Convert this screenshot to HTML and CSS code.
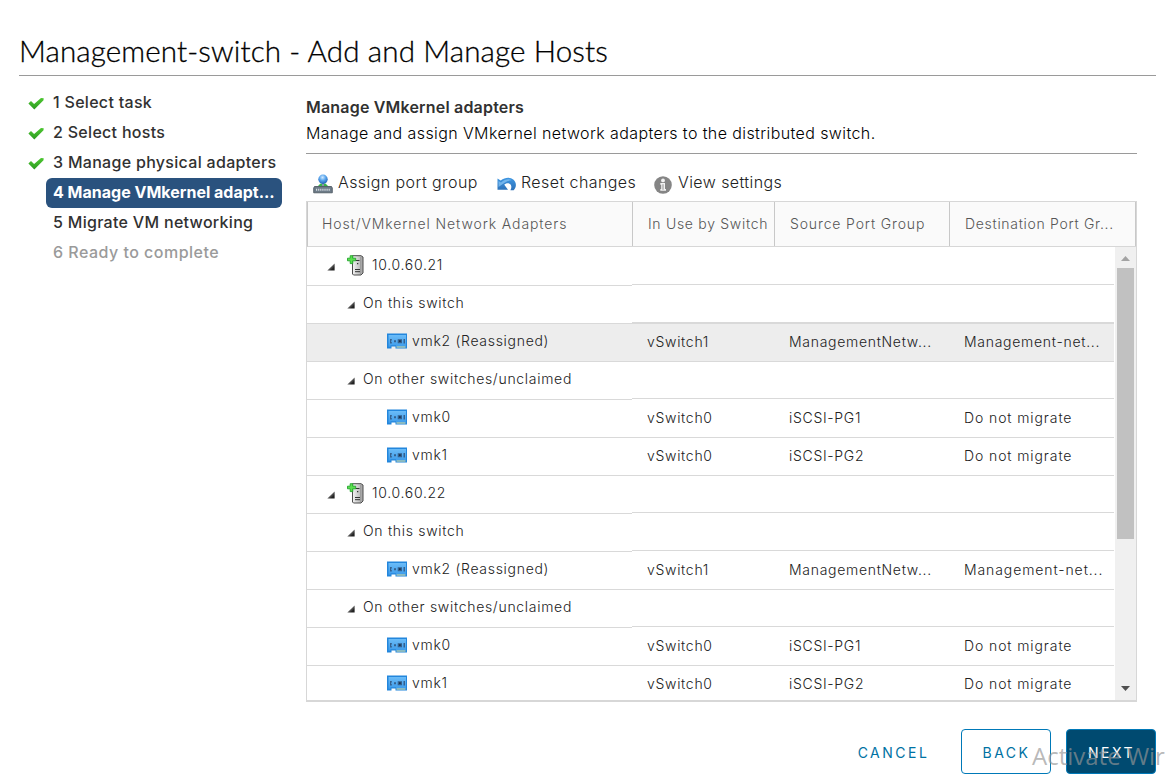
FILE: index.html
```html
<!DOCTYPE html>
<html lang="en">
<head>
<meta charset="utf-8">
<title>Management-switch - Add and Manage Hosts</title>
<link rel="stylesheet" href="styles.css">
</head>
<body>
<svg class="defs" aria-hidden="true">
  <defs>
    <linearGradient id="gGreen" x1="0" y1="0" x2="0" y2="1"><stop offset="0" stop-color="#4fc832"/><stop offset="1" stop-color="#2a9a20"/></linearGradient>
    <linearGradient id="gCard" x1="0" y1="0" x2="0" y2="1"><stop offset="0" stop-color="#6bbcf8"/><stop offset="1" stop-color="#3d9bea"/></linearGradient>
    <linearGradient id="gHost" x1="0" y1="0" x2="1" y2="0"><stop offset="0" stop-color="#f4f4f4"/><stop offset="1" stop-color="#a8a8a8"/></linearGradient>
    <linearGradient id="gUndo" x1="0" y1="0" x2="0" y2="1"><stop offset="0" stop-color="#3f97e2"/><stop offset="1" stop-color="#2d71b8"/></linearGradient>
    <linearGradient id="gArrow" x1="0" y1="0" x2="1" y2="1"><stop offset="0.3" stop-color="#999"/><stop offset="0.75" stop-color="#222"/></linearGradient>
    <radialGradient id="gBall" cx="0.45" cy="0.3" r="0.7"><stop offset="0" stop-color="#d2eaff"/><stop offset="0.45" stop-color="#5fa9ee"/><stop offset="1" stop-color="#1d62b8"/></radialGradient>
    <symbol id="check" viewBox="0 0 16 13"><path d="M0.4 6.6 3 4.1 6.1 6.9 13 0.9 15.7 1.2 15.5 3.2 6.3 12.4Z" fill="url(#gGreen)"/></symbol>
    <symbol id="arrow" viewBox="0 0 8 8"><path d="M7.6 0.4V7.5H0.3Z" fill="url(#gArrow)"/></symbol>
    <symbol id="card" viewBox="0 0 20 16">
      <path d="M0 0.5H20V15.5H8.5V13.5H4.5V15.5H0Z" fill="#2386dc"/>
      <path d="M1.5 2H19V13.5H9V12.2H3.5V13.7H1.5Z" fill="url(#gCard)"/>
      <path d="M9.5 14H18.5" stroke="#e9e6a0"/>
      <path d="M3 6H4.8V7.5H4.2V9H4.8V10.5H3ZM7 7.3H9V9.3H7ZM10.7 6.2H15V10.3H10.7ZM16.5 6H18V10.5H16.5Z" fill="#35618f"/>
      <path d="M12 7.3H13.7V9H12Z" fill="#18324f"/>
    </symbol>
    <symbol id="host" viewBox="0 0 17 21">
      <path d="M5.5 0.7H14L16 2V18L14 20H6.5L5.5 19Z" fill="url(#gHost)" stroke="#4c4c4c"/>
      <path d="M13.8 2V19" stroke="#888" stroke-width="0.8"/>
      <path d="M8.5 5.5H12.5M8 14.5H13M8 16.7H13" stroke="#333"/>
      <path d="M10 8H11.3V9.2H10Z" fill="#333"/>
      <path d="M3.2 0.7H5.8V3.2H8.7V5.8H5.8V8.6H3.2V5.8H0.5V3.2H3.2Z" fill="#5be04e" stroke="#22a52c" stroke-width="0.9"/>
    </symbol>
  </defs>
</svg>

<div class="wizard">
  <h1 class="title">Management-switch - Add and Manage Hosts</h1>
  <div class="main">
    <ol class="steps">
      <li><svg class="check"><use href="#check"/></svg><span>1 Select task</span></li>
      <li><svg class="check"><use href="#check"/></svg><span>2 Select hosts</span></li>
      <li><svg class="check"><use href="#check"/></svg><span>3 Manage physical adapters</span></li>
      <li class="active"><span>4 Manage VMkernel adapt...</span></li>
      <li><span>5 Migrate VM networking</span></li>
      <li class="disabled"><span>6 Ready to complete</span></li>
    </ol>
    <section class="page">
      <header class="intro">
        <h2>Manage VMkernel adapters</h2>
        <p>Manage and assign VMkernel network adapters to the distributed switch.</p>
      </header>
      <div class="toolbar">
        <span class="tool assign"><svg width="20" height="20" viewBox="0 0 20 20">
          <path d="M4.5 12.5 7.5 9.5H12.5L15.5 12.5Z" fill="#39b54a"/>
          <path d="M9 8.5H11V12H9Z" fill="#8796a4"/>
          <circle cx="10" cy="5.3" r="4.7" fill="url(#gBall)"/>
          <path d="M1.5 12.5H18.5L19.3 14V18.8H0.7V14Z" fill="#6d7b88" stroke="#45505b" stroke-width="0.8"/>
          <path d="M3 15.7H17" stroke="#d2dae0" stroke-width="2" stroke-dasharray="1.2 0.9"/>
        </svg>Assign port group</span>
        <span class="tool reset"><svg width="20" height="14" viewBox="0 0 20 14">
          <path d="M0.5 1.5 3.7 3.5C8.2 0 13.5 0 16.6 2.8C19.8 5.8 19.5 10.2 16.7 13.2H13.4C15 10.5 14.5 7.8 12.5 6.7C10.8 5.8 8.6 6.3 7.3 7.7L11 12.7H0.5Z" fill="url(#gUndo)"/>
          <path d="M1.5 8V4L4 5.5C8 2.2 12 1.5 15 3.4C11 2.8 6 6.5 1.5 10Z" fill="#8bc7f7" opacity="0.7"/>
        </svg>Reset changes</span>
        <span class="tool view"><svg width="18" height="18" viewBox="0 0 18 18">
          <circle cx="9" cy="9" r="8.8" fill="#858585"/>
          <circle cx="9" cy="4.4" r="1.9" fill="#f2f2f2"/>
          <path d="M6.3 7H11V13H12V14.8H6.3V13H7.2V8.7H6.3Z" fill="#f2f2f2"/>
          <path d="M9 8.2V13.8" stroke="#999" stroke-width="1.1"/>
        </svg>View settings</span>
      </div>
      <div class="table">
        <div class="thead">
          <div>Host/VMkernel Network Adapters</div><div>In Use by Switch</div><div>Source Port Group</div><div>Destination Port Gr...</div>
        </div>
        <div class="tbody">
          <div class="rows">
            <div class="row group"><div class="l1"><svg class="arrow"><use href="#arrow"/></svg><svg class="host"><use href="#host"/></svg>10.0.60.21</div><div></div><div></div><div></div></div>
            <div class="row group before-selected"><div class="l2"><svg class="arrow"><use href="#arrow"/></svg>On this switch</div><div></div><div></div><div></div></div>
            <div class="row selected"><div class="l3"><svg class="card"><use href="#card"/></svg>vmk2 (Reassigned)</div><div>vSwitch1</div><div>ManagementNetw...</div><div>Management-net...</div></div>
            <div class="row group"><div class="l2"><svg class="arrow"><use href="#arrow"/></svg>On other switches/unclaimed</div><div></div><div></div><div></div></div>
            <div class="row"><div class="l3"><svg class="card"><use href="#card"/></svg>vmk0</div><div>vSwitch0</div><div>iSCSI-PG1</div><div>Do not migrate</div></div>
            <div class="row"><div class="l3"><svg class="card"><use href="#card"/></svg>vmk1</div><div>vSwitch0</div><div>iSCSI-PG2</div><div>Do not migrate</div></div>
            <div class="row group"><div class="l1"><svg class="arrow"><use href="#arrow"/></svg><svg class="host"><use href="#host"/></svg>10.0.60.22</div><div></div><div></div><div></div></div>
            <div class="row group"><div class="l2"><svg class="arrow"><use href="#arrow"/></svg>On this switch</div><div></div><div></div><div></div></div>
            <div class="row"><div class="l3"><svg class="card"><use href="#card"/></svg>vmk2 (Reassigned)</div><div>vSwitch1</div><div>ManagementNetw...</div><div>Management-net...</div></div>
            <div class="row group"><div class="l2"><svg class="arrow"><use href="#arrow"/></svg>On other switches/unclaimed</div><div></div><div></div><div></div></div>
            <div class="row"><div class="l3"><svg class="card"><use href="#card"/></svg>vmk0</div><div>vSwitch0</div><div>iSCSI-PG1</div><div>Do not migrate</div></div>
            <div class="row"><div class="l3"><svg class="card"><use href="#card"/></svg>vmk1</div><div>vSwitch0</div><div>iSCSI-PG2</div><div>Do not migrate</div></div>
          </div>
          <div class="scrollbar">
            <svg width="9" height="5" viewBox="0 0 9 5"><path d="M0 5 4.5 0 9 5Z" fill="#a3a3a3"/></svg>
            <div class="thumb"></div>
            <svg class="down" width="9" height="5" viewBox="0 0 9 5"><path d="M0 0H9L4.5 5Z" fill="#505050"/></svg>
          </div>
        </div>
      </div>
    </section>
  </div>
  <footer class="actions">
    <button class="btn cancel">CANCEL</button>
    <button class="btn back">BACK</button>
    <button class="btn next">NEXT</button>
  </footer>
</div>
<div class="watermark">Activate Wir</div>
</body>
</html>
```
FILE: styles.css
```css
* { box-sizing: border-box; }
body {
  margin: 0;
  width: 1165px;
  height: 774px;
  overflow: hidden;
  position: relative;
  background: #fff;
  font-family: Inter, "Open Sans", sans-serif;
}
.defs { position: absolute; width: 0; height: 0; }
svg { flex: none; display: block; }
.wizard { padding: 0 9px 0 19px; }

.title {
  margin: 0;
  height: 76px;
  padding-top: 31px;
  border-bottom: 1px solid #9a9a9a;
  font: 300 29.6px/40px Lato, sans-serif;
  letter-spacing: 0.12px;
  color: #000;
  -webkit-text-stroke: 0.3px #000;
  white-space: nowrap;
}
.main { display: flex; }

.steps {
  list-style: none;
  margin: 0;
  padding: 12px 0 0 8px;
  width: 287px;
  font-size: 16px;
  font-weight: 500;
  letter-spacing: 0.3px;
  color: #313131;
}
.steps li {
  display: flex;
  align-items: center;
  height: 30px;
  margin-left: 19px;
  width: 236px;
  padding: 0 0 2px 7px;
  white-space: nowrap;
}
.steps .check { width: 16px; height: 13px; margin: 2px 9px 0 -25px; }
.steps .active { background: #2a527e; color: #fff; border-radius: 6px; font-weight: 700; letter-spacing: 0; }
.steps .disabled { color: #9a9a9a; letter-spacing: 0.48px; }

.page { width: 831px; }
.intro { height: 78px; padding-top: 20px; border-bottom: 1px solid #9a9a9a; white-space: nowrap; }
.intro h2 { margin: 0; font-size: 16px; line-height: 23px; font-weight: 600; letter-spacing: 0.19px; color: #313131; }
.intro p { margin: 2px 0 0; font-size: 16px; line-height: 24px; font-weight: 300; letter-spacing: 0.4px; color: #000; }

.toolbar { display: flex; height: 47px; padding: 16px 0 0 7px; font-size: 16px; line-height: 24px; font-weight: 300; letter-spacing: 0.42px; color: #222; }
.tool { display: flex; white-space: nowrap; }
.tool svg { margin-right: 5px; }
.assign { width: 184px; }
.assign svg { margin-top: 4px; }
.reset { width: 157px; }
.reset svg { margin-top: 7px; margin-right: 4px; }
.view svg { margin-top: 6px; margin-right: 6px; }

.table { height: 501px; border: 1px solid #d7d7d7; border-bottom-width: 2px; font-size: 14px; }
.thead {
  display: grid;
  grid-template-columns: 325px 142px 175px 1fr;
  height: 45px;
  background: #fafafa;
  border-bottom: 1px solid #d7d7d7;
  border-left: 1px solid #c8c8c8;
  color: #565656;
  letter-spacing: 0.7px;
  font-weight: 300;
  line-height: 44px;
}
.thead div { border-right: 1px solid #c8c8c8; padding-left: 15px; white-space: nowrap; }
.thead div:first-child { padding-left: 14px; letter-spacing: 0.9px; }
.thead div:nth-child(3) { letter-spacing: 0.86px; }
.tbody { display: flex; height: 453px; overflow: hidden; letter-spacing: 0.7px; font-weight: 300; color: #222; }
.rows { width: 807px; padding-top: 1px; }
.row { display: grid; grid-template-columns: 325px 142px 175px 165px; height: 38px; line-height: 35px; }
.row > div { border-bottom: 1px solid #d9d9d9; padding-left: 15px; height: 38px; white-space: nowrap; }
.row > div:first-child { display: flex; align-items: center; line-height: 34px; padding-bottom: 3px; }
.row > div:last-child { letter-spacing: 0.72px; }
.row:not(.selected) > div:last-child { letter-spacing: 0.9px; }
.group > div:not(:first-child) { height: 37px; }
.before-selected > div:not(:first-child) { height: 38px; border-bottom-width: 2px; }
.selected { background: #ededed; }
.row .l1 { padding-left: 20px; }
.row .l2 { padding-left: 40px; }
.row .l3 { padding-left: 80px; }
.arrow { width: 8px; height: 8px; margin: 3px 8px 0 0; }
.host { width: 17px; height: 21px; margin: 0 8px 0 4px; }
.card { width: 20px; height: 16px; margin-right: 5px; }

.scrollbar { width: 21px; margin-left: 1px; background: #f0f0f0; display: flex; flex-direction: column; align-items: center; padding-top: 9px; }
.thumb { width: 17px; height: 271px; margin-top: 7px; background: #c1c1c1; }
.down { margin-top: auto; margin-bottom: 9px; }

.actions { display: flex; justify-content: flex-end; gap: 15px; margin-top: 27px; }
.btn { width: 90px; height: 45px; padding: 3px 0 0; border: 1px solid #0079b8; border-radius: 4px; background: #fff; color: #0072a3; font: 400 14px/20px Inter, sans-serif; letter-spacing: 2.5px; text-indent: 1px; }
.btn.cancel { width: 106px; border-color: transparent; }
.btn.next { background: #004a70; color: #fff; }
.watermark { position: absolute; left: 1032px; top: 740px; font: 400 24px/32px "Open Sans", sans-serif; color: rgba(150, 150, 150, 0.68); white-space: nowrap; }
```
